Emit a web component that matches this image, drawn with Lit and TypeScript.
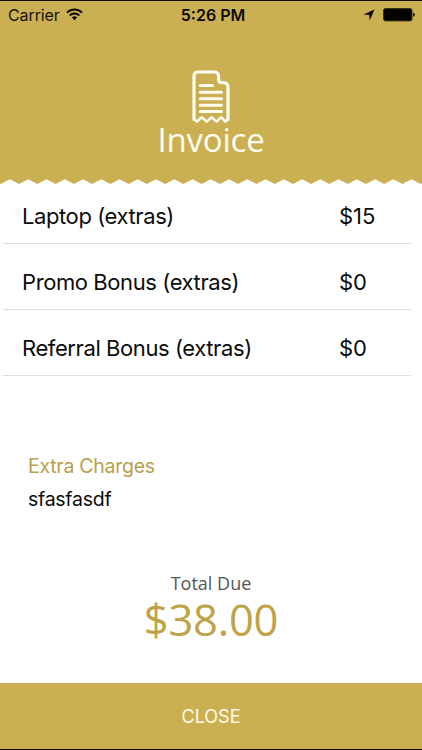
import { LitElement, html, css } from "lit";
import { customElement } from "lit/decorators.js";

const PERIOD = 18.25;
const FIRST_PEAK = 10;

function tearPath(): string {
  let d = `M${FIRST_PEAK - PERIOD} 0`;
  for (let i = 0; i < 25; i++) {
    const x = FIRST_PEAK + (i - 1) * PERIOD;
    d += `L${x} .3L${x + PERIOD / 2} 5`;
  }
  return d + "V0Z";
}

@customElement("app-root")
export class AppRoot extends LitElement {
  static styles = css`
    :host {
      display: flex;
      flex-direction: column;
      box-sizing: border-box;
      width: 422px;
      height: 750px;
      overflow: hidden;
      background: #fff;
      color: #0c0c0c;
      border-top: 1px solid #120d04;
      border-bottom: 1px solid #120d04;
      font-family: Inter, "Liberation Sans", sans-serif;
      white-space: nowrap;
    }
    svg { display: block; }
    .header {
      height: 178px;
      flex: none;
      background: #cab053;
      display: flex;
      flex-direction: column;
      align-items: center;
    }
    .status {
      align-self: stretch;
      display: grid;
      grid-template-columns: 1fr auto 1fr;
      align-items: center;
      height: 28px;
      padding: 0 8px;
      font-size: 16px;
      line-height: 28px;
      color: #171305;
    }
    .left, .right { display: flex; align-items: center; }
    .carrier { letter-spacing: -0.1px; }
    .wifi { margin: -2px 0 0 6px; }
    .time { font-weight: 600; color: #0c0a02; padding-left: 4px; }
    .right { justify-content: flex-end; gap: 7px; margin-right: -5px; }
    .receipt { margin-top: 41px; }
    .title {
      font-family: "Open Sans", sans-serif;
      font-weight: 400;
      font-size: 33px;
      line-height: 40px;
      letter-spacing: -0.2px;
      margin: -4px 0 0;
      color: #fffdf0;
    }
    .tear { flex: none; }
    .rows { margin: -7px 11px 0 3px; }
    .row {
      display: grid;
      grid-template-columns: 1fr 72px;
      height: 65px;
      border-bottom: 1px solid #dedede;
      padding-left: 19px;
      align-items: center;
      font-size: 22px;
      line-height: 28px;
    }
    .row span { padding-top: 11px; }
    .name { letter-spacing: -0.41px; }
    .extra { margin: 76px 0 0 28px; font-size: 19.5px; line-height: 28px; letter-spacing: -0.27px; }
    .label { color: #b99e4c; }
    .note { margin-top: 5px; }
    .total {
      margin-top: 58px;
      text-align: center;
      font-family: "Open Sans", sans-serif;
    }
    .due { color: #555; font-size: 18px; line-height: 24px; }
    .amount { color: #bfa348; font-size: 43.5px; line-height: 50px; letter-spacing: -0.25px; }
    .close {
      margin-top: auto;
      height: 66px;
      flex: none;
      border: 0;
      padding: 1px 0 0;
      background: #cab053;
      color: #fffbe6;
      font: 400 18px/65px Inter, sans-serif;
    }
  `;

  private items = [
    ["Laptop (extras)", "$15"],
    ["Promo Bonus (extras)", "$0"],
    ["Referral Bonus (extras)", "$0"],
  ];

  render() {
    return html`
      <div class="header">
        <div class="status">
          <div class="left">
            <span class="carrier">Carrier</span>
            <svg class="wifi" width="17" height="13" viewBox="0 0 17 13" fill="none" stroke="#0c0a02" stroke-width="2">
              <path d="M1 4.6A10.6 10.6 0 0 1 16 4.6M3.7 7.5A6.8 6.8 0 0 1 13.3 7.5" />
              <path d="M8.5 12.3L5.9 9.6A3.7 3.7 0 0 1 11.1 9.6Z" fill="#0c0a02" stroke="none" />
            </svg>
          </div>
          <span class="time">5:26 PM</span>
          <div class="right">
            <svg width="12" height="12" viewBox="0 0 12 12" fill="#0c0a02"><path d="M11.5 .5L6.7 11.5L6.2 6L.5 5.5Z" /></svg>
            <svg width="37" height="14" viewBox="0 0 37 14">
              <rect x="1.5" y=".5" width="28.5" height="12.4" rx="2" fill="#050400" stroke="#3b3314" />
              <path d="M31.2 4.8Q32.8 5.2 32.8 6.8Q32.8 8.4 31.2 8.8Z" fill="#050400" />
            </svg>
          </div>
        </div>
        <svg class="receipt" width="38" height="54" viewBox="0 0 38 54" fill="none" stroke="#fffdf0" stroke-width="3.2" stroke-linecap="round" stroke-linejoin="round">
          <path d="M2 49.5V6Q2 2 6 2H22.5Q24.8 2 25.8 3.6Q26.6 5 26.6 7.5V9.5Q26.6 12.6 29.7 12.6H31.5Q36 12.8 36 17V49.5" />
          <path d="M2 49L5 51.6L9.7 47.2L14.7 51.6L19.6 47.2L24.5 51.6L29.3 47.2L33.4 51.6L36 49" stroke-width="2.5" />
          <path d="M8.3 15.6H20.5M8.3 22.3H29.5M8.3 28.8H29.5M8.3 35.2H29.5M8.3 41.6H29.5" stroke-width="3" />
        </svg>
        <h1 class="title">Invoice</h1>
      </div>
      <svg class="tear" width="422" height="6" viewBox="0 0 422 6"><path d=${tearPath()} fill="#cab053" /></svg>
      <div class="rows">
        ${this.items.map(
          ([name, price]) => html`<div class="row"><span class="name">${name}</span><span>${price}</span></div>`
        )}
      </div>
      <div class="extra">
        <div class="label">Extra Charges</div>
        <div class="note">sfasfasdf</div>
      </div>
      <div class="total">
        <div class="due">Total Due</div>
        <div class="amount">$38.00</div>
      </div>
      <button class="close">CLOSE</button>
    `;
  }
}
